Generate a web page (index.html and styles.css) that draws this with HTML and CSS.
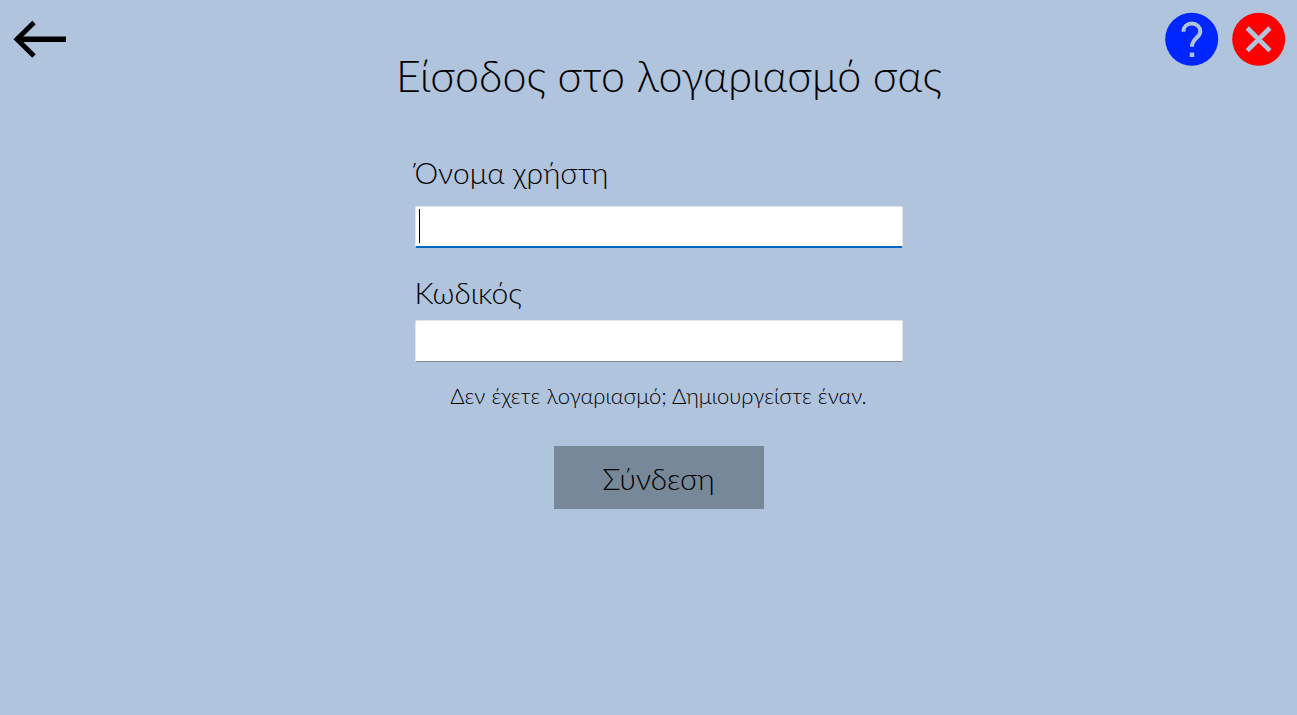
FILE: index.html
```html
<!DOCTYPE html>
<html lang="el">
<head>
<meta charset="utf-8">
<meta name="viewport" content="width=device-width, initial-scale=1">
<title>Είσοδος</title>
<link rel="stylesheet" href="styles.css">
</head>
<body>
<header class="top-bar">
  <button class="icon-button back" type="button" aria-label="Πίσω">
    <svg width="54" height="54" viewBox="0 0 54 54" aria-hidden="true">
      <path d="M54 27.200H4" fill="none" stroke="#000" stroke-width="5.500"/>
      <path d="M22 10.500L5 27.200L22 44" fill="none" stroke="#000" stroke-width="5"/>
    </svg>
  </button>
  <h1 class="title">Είσοδος στο λογαριασμό σας</h1>
  <div class="actions">
    <button class="icon-button" type="button" aria-label="Βοήθεια">
      <svg width="54" height="54" viewBox="0 0 54 54" aria-hidden="true">
        <circle cx="26.700" cy="27.200" r="26.500" fill="#0026ff"/>
        <path d="M18.400 19.800C18.400 15 21.800 11.600 26.800 11.600C31.800 11.600 35.300 15 35.300 19.400C35.300 25.500 26.900 26.500 26.900 34.800" fill="none" stroke="#b0c4de" stroke-width="4"/>
        <path d="M24.800 40.500H29.200V45H24.800Z" fill="#b0c4de"/>
      </svg>
    </button>
    <button class="icon-button" type="button" aria-label="Κλείσιμο">
      <svg width="54" height="54" viewBox="0 0 54 54" aria-hidden="true">
        <circle cx="26.700" cy="27.200" r="26.500" fill="#f00"/>
        <path d="M15.300 16L37.900 38.600M37.900 16L15.300 38.600" fill="none" stroke="#b0c4de" stroke-width="4.600"/>
      </svg>
    </button>
  </div>
</header>
<main class="content">
  <form class="login">
    <label class="label" for="username">Όνομα χρήστη</label>
    <input class="field" id="username" type="text" autofocus>
    <label class="label label-password" for="password">Κωδικός</label>
    <input class="field" id="password" type="password">
    <a class="signup" href="#">Δεν έχετε λογαριασμό; Δημιουργείστε έναν.</a>
    <button class="submit" type="submit">Σύνδεση</button>
  </form>
</main>
</body>
</html>
```
FILE: styles.css
```css
* {
  box-sizing: border-box;
}

body {
  margin: 0;
  min-height: 100vh;
  background: #b0c4de;
  color: #000;
  font-family: "Century Gothic", Lato, "Open Sans", sans-serif;
  font-weight: 300;
}

.top-bar {
  display: grid;
  grid-template-columns: 1fr auto 1fr;
  align-items: start;
  padding: 12px 11px 0 12px;
}

.icon-button {
  width: 54px;
  height: 54px;
  padding: 0;
  border: 0;
  background: none;
  cursor: pointer;
}

.icon-button svg {
  display: block;
}

.title {
  margin: 0;
  padding: 40px 0 0 40px;
  font-size: 43px;
  line-height: 48px;
  font-weight: 300;
}

.actions {
  display: flex;
  justify-content: flex-end;
  gap: 13px;
}

.content {
  display: flex;
  justify-content: center;
  padding: 54px 0 24px 20px;
}

.login {
  display: flex;
  flex-direction: column;
  width: 488px;
  max-width: 100%;
}

.label {
  font-size: 30px;
  line-height: 36px;
}

.label-password {
  margin-top: 26px;
}

.field {
  height: 42px;
  margin-top: 16px;
  padding: 2px 4px;
  border: 1px solid #e5e5e5;
  border-bottom-color: #868686;
  border-radius: 2px;
  background: #fff;
  font: inherit;
  font-size: 28px;
  outline: 0;
}

.label-password + .field {
  margin-top: 10px;
}

.field:focus {
  border-bottom: 2px solid #0067c0;
  background: linear-gradient(#000, #000) 3px 2px / 1px 34px no-repeat #fff;
  caret-color: transparent;
}

.signup {
  align-self: center;
  margin-top: 20px;
  color: inherit;
  font-size: 22px;
  line-height: 28px;
  text-decoration: none;
}

.submit {
  align-self: center;
  width: 210px;
  height: 63px;
  margin-top: 36px;
  padding: 0;
  border: 0;
  background: #778899;
  color: inherit;
  font: inherit;
  font-size: 30px;
}
```
